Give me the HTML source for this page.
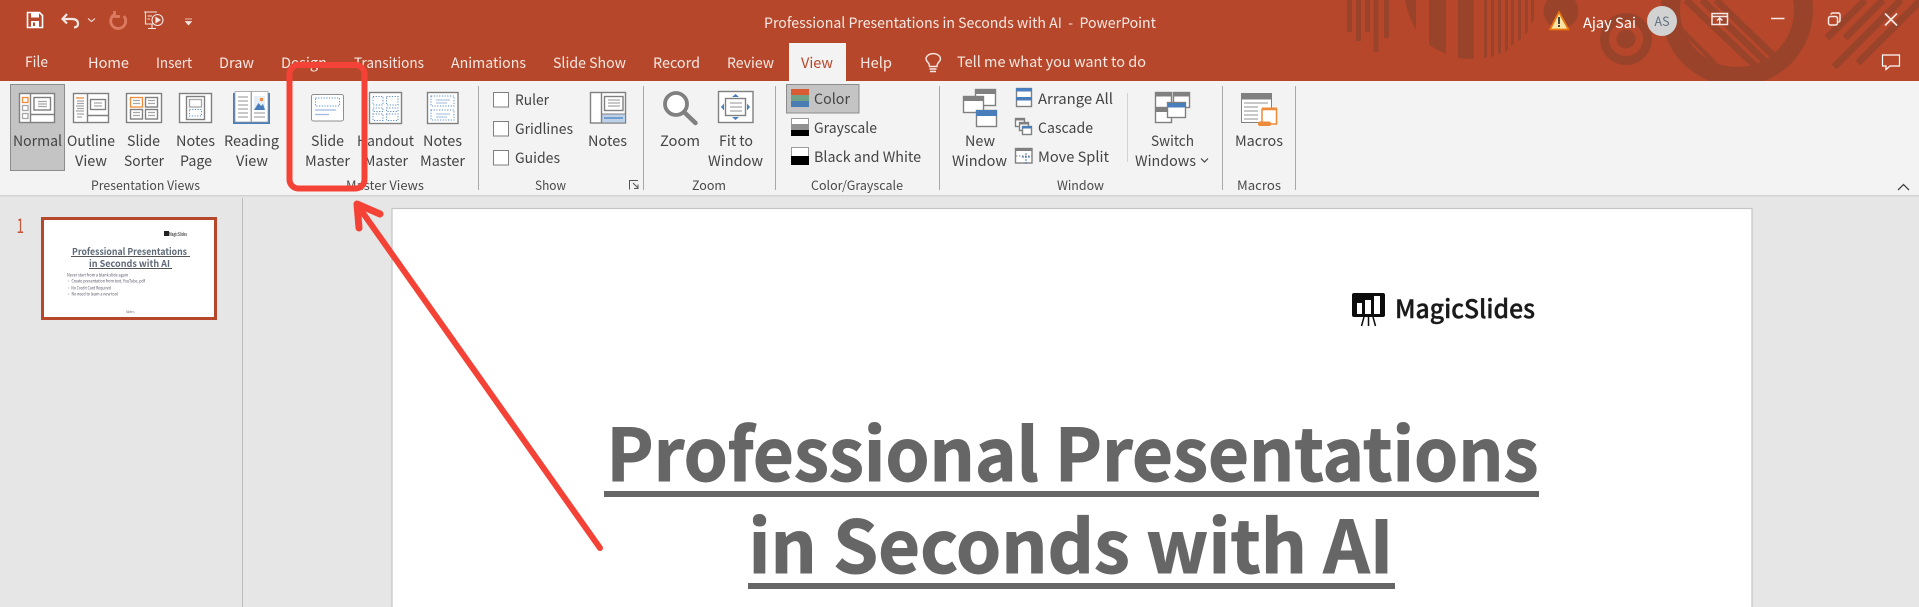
<!DOCTYPE html>
<html><head><meta charset="utf-8"><title>Professional Presentations in Seconds with AI - PowerPoint</title>
<style>
html,body{margin:0;padding:0;width:1919px;height:607px;overflow:hidden;background:#e6e6e6}
svg{display:block;position:absolute;left:0;top:0}
text{font-family:"Noto Sans CJK SC","Liberation Sans",sans-serif;white-space:pre}
.t{font-size:14.5px;fill:#f6e8e4}
.l{font-size:14.5px;fill:#444}
.g{font-size:12.5px;fill:#4a4a4a}
.i{fill:#fff;stroke:#808080;stroke-width:1.4}
.n{fill:none;stroke:#808080;stroke-width:1.4}
.b{fill:none;stroke:#5b8cc4;stroke-width:1;stroke-dasharray:1.2 1.5}
.p{fill:#9a432b}
.d{fill:none;stroke:#9a432b}
.m{fill:none;stroke:#a6a6a6;stroke-width:1.3}
.sep{stroke:#a8a8a8;stroke-width:1}
</style></head><body>
<svg width="1919" height="607" viewBox="0 0 1919 607" xmlns="http://www.w3.org/2000/svg">
<defs><clipPath id="banner"><rect width="1919" height="81"/></clipPath>
<clipPath id="inner"><circle cx="1737" cy="10" r="57"/></clipPath></defs>
<rect width="1919" height="607" fill="#e6e6e6"/>
<!-- title bar -->
<rect width="1919" height="81" fill="#b7472a"/>
<g clip-path="url(#banner)">
<rect class="p" x="1347" y="0" width="5" height="32"/><rect class="p" x="1356" y="0" width="5" height="41"/><rect class="p" x="1365" y="0" width="5" height="32"/><rect class="p" x="1373.5" y="0" width="5" height="52"/><rect class="p" x="1384" y="0" width="5" height="38"/>
<path class="p" d="M1405 0H1416V30Q1408 16 1405 0Z"/>
<path class="p" d="M1429 0H1446V54Q1437 50 1429 45Z"/>
<path class="p" d="M1458 0H1474V59Q1465 59 1458 58Z"/>
<path class="p" d="M1484 0h3v57l-3 1zM1491 0h3v56l-3 1zM1498 0h3v53l-3 1zM1505 0h3v50l-3 2zM1511 0h3v44l-3 2zM1518 0h3v39l-3 2zM1525 0h3v32l-3 3zM1531 0h3v20l-3 4z"/>
<circle class="p" cx="1561" cy="11" r="17.5"/>
<circle class="d" cx="1626" cy="39" r="21.5" stroke-width="9"/><circle class="p" cx="1626" cy="39" r="9.5"/>
<circle class="d" cx="1737" cy="10" r="66.5" stroke-width="19"/>
<g clip-path="url(#inner)" class="d" stroke-width="7">
<path d="M1686 0L1766 76M1702 0L1776 72M1716 0L1786 68"/>
<path d="M1680 28L1716 64" stroke-width="4"/>
</g>
<g class="d" stroke-width="7"><path d="M1827 38L1865 0M1845 38L1883 0M1834 67L1901 0M1858 63L1921 0"/></g>
</g>
<!-- QAT -->
<path d="M27.5 12.5H39.5L42.5 15.5V27.5H27.5Z" fill="none" stroke="#fff" stroke-width="1.6"/><rect x="31" y="12.5" width="8" height="5" fill="#fff"/><rect x="31" y="21" width="8" height="6.5" fill="#fff"/><rect x="33" y="22.5" width="2" height="3.5" fill="#b7472a"/>
<path d="M67 14L62.5 19L67 23.5M63 19H72Q78 19 78 24Q78 27 74 27.5" fill="none" stroke="#f4e6e2" stroke-width="2.2"/>
<path d="M88 18.5L91.5 21.5L95 18.5" fill="none" stroke="#f4e6e2" stroke-width="1.1"/>
<path d="M123.800 16A7.500 7.500 0 1 1 114.500 14.500M114.500 11V16.500H120" fill="none" stroke="#dc7b62" stroke-width="2.800"/>
<g fill="none" stroke="#f4e6e2" stroke-width="1.1"><path d="M144 12H157M145.5 12V24H153M147.5 16H152M147.5 19H150"/><circle cx="157.5" cy="20" r="5.5"/><path d="M156 17.5L160 20L156 22.5Z" fill="#f4e6e2"/><path d="M148 28.5H156M152 24V28"/></g>
<path d="M185 19H192M185.5 21.5H191.5L188.5 25Z" fill="#f4e6e2" stroke="#f4e6e2" stroke-width=".7"/>
<!-- Tabs -->
<text class="t" x="25" y="67" textLength="23" lengthAdjust="spacingAndGlyphs">File</text>
<text class="t" x="88" y="68" textLength="41" lengthAdjust="spacingAndGlyphs">Home</text>
<text class="t" x="156" y="68" textLength="36" lengthAdjust="spacingAndGlyphs">Insert</text>
<text class="t" x="219" y="68" textLength="35" lengthAdjust="spacingAndGlyphs">Draw</text>
<text class="t" x="281" y="68" textLength="46" lengthAdjust="spacingAndGlyphs">Design</text>
<text class="t" x="354" y="68" textLength="70" lengthAdjust="spacingAndGlyphs">Transitions</text>
<text class="t" x="451" y="68" textLength="75" lengthAdjust="spacingAndGlyphs">Animations</text>
<text class="t" x="553" y="68" textLength="73" lengthAdjust="spacingAndGlyphs">Slide Show</text>
<text class="t" x="653" y="68" textLength="47" lengthAdjust="spacingAndGlyphs">Record</text>
<text class="t" x="727" y="68" textLength="47" lengthAdjust="spacingAndGlyphs">Review</text>
<rect x="789" y="43" width="57" height="39" fill="#f3f3f3"/>
<text class="t" x="801" y="68" textLength="32" lengthAdjust="spacingAndGlyphs" style="fill:#b7472a">View</text>
<text class="t" x="860" y="68" textLength="32" lengthAdjust="spacingAndGlyphs">Help</text>
<path d="M930 71.500H936M929.500 69H936.500M929.500 66.500Q929.500 64 928 62.500Q926 60.500 926 58.500A7.300 5.600 0 0 1 940.500 58.500Q940.500 60.500 938.500 62.500Q937 64 937 66.500Z" fill="none" stroke="#f6e8e4" stroke-width="1.400"/>
<text class="t" x="957" y="67" textLength="189" lengthAdjust="spacingAndGlyphs">Tell me what you want to do</text>
<text class="t" x="764" y="28" textLength="392" lengthAdjust="spacingAndGlyphs">Professional Presentations in Seconds with AI  -  PowerPoint</text>
<!-- user -->
<path d="M1559 12L1568.500 29.500H1550Z" fill="#fbe3a1" stroke="#e8760f" stroke-width="1.8" stroke-linejoin="round"/><rect x="1558" y="17" width="2" height="7" fill="#444"/><rect x="1558" y="25" width="2" height="2" fill="#444"/>
<text class="t" x="1583" y="28" textLength="53" lengthAdjust="spacingAndGlyphs" style="fill:#fff">Ajay Sai</text>
<circle cx="1662" cy="21" r="15" fill="#d2d2d2"/>
<text x="1654.500" y="26" font-size="12.500" textLength="15" lengthAdjust="spacingAndGlyphs" fill="#5f6f80">AS</text>
<g fill="none" stroke="#f6e8e4" stroke-width="1.5"><path d="M1712 13.500H1727.500V24.500H1712ZM1712 16.500H1727.500"/><path d="M1719.700 24V18.500M1717 20.500L1719.700 18L1722.500 20.500"/>
<path d="M1771 18.500H1784.500"/><rect x="1828.500" y="16.500" width="9" height="8.500" rx="2"/><path d="M1831 14.500Q1831 13 1833 13H1838Q1840 13 1840 15V20Q1840 22 1838.500 22"/>
<path d="M1885 13.500L1897 25.500M1897 13.500L1885 25.500" stroke-width="1.7"/></g>
<path d="M1882.500 55H1899.500V66H1890L1886 69.500V66H1882.500Z" fill="none" stroke="#fff" stroke-width="1.200"/>
<!-- ribbon -->
<rect y="81" width="1919" height="114" fill="#f3f3f3"/>
<rect y="195" width="1919" height="1.500" fill="#d3d3d3"/>
<path class="sep" d="M478.500 86V190M643.500 86V190M775.500 86V190M939.500 86V190M1222.500 86V190M1295.500 86V190"/>
<path stroke="#d2d2d2" d="M1127.500 93V162"/>
<rect x="10.500" y="84.500" width="54" height="86" fill="#c4c4c4" stroke="#8c8c8c" stroke-width="1"/>
<!-- Normal icon -->
<rect class="i" x="19.500" y="93.500" width="35" height="29"/><path class="n" d="M30.500 93.500V122.500M30.500 114.500H54.500"/><rect class="n" x="34" y="97.500" width="16.500" height="12.500"/>
<path class="m" d="M38 101.500H47M38 104H47M38 106.500H47"/>
<rect x="22.500" y="97.500" width="5.500" height="5" fill="none" stroke="#ed8b3a" stroke-width="1.300"/><rect x="22.500" y="105.500" width="5.500" height="5" class="m"/><rect x="22.500" y="113.500" width="5.500" height="5" class="m"/>
<!-- Outline -->
<rect class="i" x="73.500" y="93.500" width="35" height="29"/><path class="n" d="M87.500 93.500V122.500M87.500 115.500H108.500"/><rect class="n" x="90.500" y="99.500" width="15" height="10"/>
<path stroke="#ed8b3a" stroke-width="1.300" d="M76 98H84"/><path class="m" d="M77 101H84M77 103.500H84M76 106H84M77 108.500H84M76 111H84M77 114H84M77 117H82M94 103H102M94 106H102"/>
<!-- Sorter -->
<rect class="i" x="126.500" y="93.500" width="35" height="29"/><rect x="130.500" y="97.500" width="12" height="9.500" fill="none" stroke="#ed8b3a" stroke-width="1.300"/><rect class="n" x="145.500" y="97.500" width="12" height="9.500"/><rect class="n" x="130.500" y="109.500" width="12" height="9.500"/><rect class="n" x="145.500" y="109.500" width="12" height="9.500"/>
<path class="m" d="M133 100.500H140M133 103.500H140M148 100.500H155M148 103.500H155M133 112.500H140M133 115.500H140M148 112.500H155M148 115.500H155"/>
<!-- Notes Page -->
<rect class="i" x="179.500" y="93.500" width="32" height="29"/><rect class="n" x="186.500" y="96.500" width="18" height="23"/><rect class="m" x="189.500" y="99.500" width="12" height="7.500"/><rect class="b" x="189.500" y="109.500" width="12" height="6.500"/>
<!-- Reading -->
<rect x="233" y="93" width="37" height="31" fill="#4a7ebb"/><path d="M235 91.500H251V122H235ZM251.500 91.500H268V122H251.500Z" fill="#fff" stroke="#9a9a9a" stroke-width=".8"/>
<path class="m" d="M238 97H248M238 101H248M238 105H248M238 109H248M238 113H248M238 117H248M254 113H265M254 117H265"/><rect x="254" y="96" width="11" height="14" fill="#e8eef5"/><path d="M254 110L258.500 103L261 106L263 104L265 110Z" fill="#4a7ebb"/><circle cx="261.500" cy="99.500" r="1.700" fill="#ed8b3a"/>
<!-- Slide Master -->
<rect x="311.500" y="94.500" width="32" height="26.500" rx="2" fill="#fff" stroke="#8f8f8f" stroke-width="1"/><rect class="b" x="315.500" y="98" width="24" height="8"/><path stroke="#9dbbdc" stroke-width="1.200" d="M315 110H336M315 114.500H329"/>
<!-- Handout -->
<rect class="i" x="369.500" y="92.500" width="32" height="31"/><path class="b" d="M373 96.500H383V105H373ZM386.500 96.500H398V105H386.500ZM373 108H383V111.500H373ZM386.500 108H398V111.500H386.500ZM373 114H383V120.500H373ZM386.500 114H398V120.500H386.500Z"/>
<!-- Notes Master -->
<rect class="i" x="427.500" y="92.500" width="30.500" height="31"/><rect class="b" x="431" y="96" width="23" height="10"/><rect class="b" x="431" y="110" width="23" height="10"/><path stroke="#9dbbdc" d="M436 100H450M436 103H447M436 114H450M436 117H447"/>
<!-- Labels presentation -->
<text class="l" x="13" y="146" textLength="49" lengthAdjust="spacingAndGlyphs">Normal</text>
<text class="l" x="67" y="146" textLength="48" lengthAdjust="spacingAndGlyphs">Outline</text><text class="l" x="75" y="166" textLength="32" lengthAdjust="spacingAndGlyphs">View</text>
<text class="l" x="127" y="146" textLength="33" lengthAdjust="spacingAndGlyphs">Slide</text><text class="l" x="124" y="166" textLength="40" lengthAdjust="spacingAndGlyphs">Sorter</text>
<text class="l" x="176" y="146" textLength="39" lengthAdjust="spacingAndGlyphs">Notes</text><text class="l" x="180" y="166" textLength="32" lengthAdjust="spacingAndGlyphs">Page</text>
<text class="l" x="224" y="146" textLength="55" lengthAdjust="spacingAndGlyphs">Reading</text><text class="l" x="236" y="166" textLength="32" lengthAdjust="spacingAndGlyphs">View</text>
<text class="l" x="311" y="146" textLength="33" lengthAdjust="spacingAndGlyphs">Slide</text><text class="l" x="305" y="166" textLength="45" lengthAdjust="spacingAndGlyphs">Master</text>
<text class="l" x="357" y="146" textLength="57" lengthAdjust="spacingAndGlyphs">Handout</text><text class="l" x="364" y="166" textLength="44" lengthAdjust="spacingAndGlyphs">Master</text>
<text class="l" x="423" y="146" textLength="39" lengthAdjust="spacingAndGlyphs">Notes</text><text class="l" x="420" y="166" textLength="45" lengthAdjust="spacingAndGlyphs">Master</text>
<text class="g" x="91" y="190" textLength="109" lengthAdjust="spacingAndGlyphs">Presentation Views</text>
<text class="g" x="346" y="190" textLength="78" lengthAdjust="spacingAndGlyphs">Master Views</text>
<!-- Show -->
<g fill="#fff" stroke="#7f7f7f" stroke-width="1"><rect x="493.500" y="92.500" width="15" height="14.500"/><rect x="493.500" y="121.500" width="15" height="14.500"/><rect x="493.500" y="150.500" width="15" height="14.500"/></g>
<text class="l" x="515" y="105" textLength="34" lengthAdjust="spacingAndGlyphs">Ruler</text>
<text class="l" x="515" y="134" textLength="58" lengthAdjust="spacingAndGlyphs">Gridlines</text>
<text class="l" x="515" y="163" textLength="45" lengthAdjust="spacingAndGlyphs">Guides</text>
<rect class="i" x="590.500" y="92.500" width="35" height="30.500"/><rect x="601.500" y="114" width="24" height="9" fill="#bdd1e8" stroke="#808080"/><path class="n" d="M601.500 92.500V123"/><rect class="n" x="604.500" y="96.500" width="18.500" height="14"/><path class="m" d="M608 100H620M608 103H620M608 106H620"/><path stroke="#4a7ebb" stroke-width="1.200" d="M604 118H623"/>
<text class="l" x="588" y="146" textLength="39" lengthAdjust="spacingAndGlyphs">Notes</text>
<text class="g" x="535" y="190" textLength="31" lengthAdjust="spacingAndGlyphs">Show</text>
<path d="M629.500 189.500V180.500H638M633 183L638 188M638 184.500V188.500H634" fill="none" stroke="#555" stroke-width="1"/>
<!-- Zoom -->
<circle cx="676" cy="104" r="11" fill="#fff" stroke="#808080" stroke-width="3.800"/><path d="M684 112L695.500 123" stroke="#808080" stroke-width="4.500" stroke-linecap="round"/>
<rect class="i" x="718.500" y="91.500" width="34.500" height="31"/><rect class="n" x="725.500" y="98.500" width="20" height="17"/><path class="m" d="M730 103H742M730 107H742M730 111H742"/><path d="M735.500 94L739 97H732ZM735.500 120L739 117H732ZM721 107L724 103.500V110.500ZM750 107L747 103.500V110.500Z" fill="#4a7ebb"/>
<text class="l" x="660" y="146" textLength="40" lengthAdjust="spacingAndGlyphs">Zoom</text>
<text class="l" x="719" y="146" textLength="34" lengthAdjust="spacingAndGlyphs">Fit to</text>
<text class="l" x="708" y="166" textLength="55" lengthAdjust="spacingAndGlyphs">Window</text>
<text class="g" x="692" y="190" textLength="34" lengthAdjust="spacingAndGlyphs">Zoom</text>
<!-- Color -->
<rect x="786.500" y="84.500" width="72.500" height="28.500" fill="#c4c4c4" stroke="#8c8c8c"/>
<rect x="791" y="89" width="18" height="6" fill="#d95b34"/><rect x="791" y="95" width="18" height="6" fill="#6fa287"/><rect x="791" y="101" width="18" height="6" fill="#4b7db5"/>
<rect x="791.500" y="118.500" width="17" height="6" fill="#fff" stroke="#9a9a9a"/><rect x="791" y="124" width="18" height="6" fill="#919191"/><rect x="791" y="130" width="18" height="6" fill="#000"/>
<rect x="791.500" y="147.500" width="17" height="9" fill="#fff" stroke="#9a9a9a"/><rect x="791" y="156" width="18" height="9" fill="#000"/>
<text class="l" x="814" y="104" textLength="36" lengthAdjust="spacingAndGlyphs">Color</text>
<text class="l" x="814" y="133" textLength="63" lengthAdjust="spacingAndGlyphs">Grayscale</text>
<text class="l" x="814" y="162" textLength="107" lengthAdjust="spacingAndGlyphs">Black and White</text>
<text class="g" x="811" y="190" textLength="92" lengthAdjust="spacingAndGlyphs">Color/Grayscale</text>
<!-- Window -->
<rect class="i" x="975.500" y="89.500" width="20" height="16"/><rect x="975" y="89" width="21" height="5" fill="#808080"/>
<rect class="i" x="963.500" y="96.500" width="20" height="16"/><rect x="963" y="96" width="21" height="5" fill="#808080"/>
<rect class="i" x="976.500" y="110.500" width="20" height="16"/><rect x="976" y="110" width="21" height="6" fill="#4a7ebb"/>
<text class="l" x="965" y="146" textLength="30" lengthAdjust="spacingAndGlyphs">New</text>
<text class="l" x="952" y="166" textLength="55" lengthAdjust="spacingAndGlyphs">Window</text>
<rect class="i" x="1016.500" y="88.500" width="15" height="18"/><rect x="1016" y="88" width="16" height="3.500" fill="#4a7ebb"/><rect x="1016" y="97" width="16" height="3.500" fill="#4a7ebb"/>
<rect class="i" x="1015.500" y="118.500" width="9" height="8"/><rect x="1015" y="118" width="10" height="2.500" fill="#808080"/><rect class="i" x="1019.500" y="122.500" width="9" height="8"/><rect x="1019" y="122" width="10" height="2.500" fill="#808080"/><rect class="i" x="1022.500" y="126.500" width="9" height="8"/><rect x="1022" y="126" width="10" height="2.500" fill="#4a7ebb"/>
<rect class="i" x="1015.500" y="148.500" width="16.500" height="14.500"/><rect x="1015" y="148" width="17" height="3" fill="#808080"/><path d="M1016 156H1032" stroke="#808080" stroke-width="1" stroke-dasharray="1.500 1.500"/><path d="M1026 153V164M1022 157H1030" stroke="#4a7ebb" stroke-width="1" stroke-dasharray="2 1"/>
<text class="l" x="1038" y="104" textLength="75" lengthAdjust="spacingAndGlyphs">Arrange All</text>
<text class="l" x="1038" y="133" textLength="55" lengthAdjust="spacingAndGlyphs">Cascade</text>
<text class="l" x="1038" y="162" textLength="71" lengthAdjust="spacingAndGlyphs">Move Split</text>
<text class="g" x="1057" y="190" textLength="47" lengthAdjust="spacingAndGlyphs">Window</text>
<rect class="i" x="1155.500" y="92.500" width="16" height="15"/><rect x="1155" y="92" width="17" height="4.500" fill="#808080"/><rect class="i" x="1173.500" y="92.500" width="16" height="15"/><rect x="1173" y="92" width="17" height="4.500" fill="#808080"/><rect class="i" x="1155.500" y="108.500" width="16" height="14"/><rect x="1155" y="108" width="17" height="4" fill="#808080"/>
<rect x="1167.500" y="102.500" width="18" height="15" fill="#fff" stroke="#808080" stroke-width="1.400"/><rect x="1168" y="103" width="18" height="4.500" fill="#4a7ebb"/>
<text class="l" x="1151" y="146" textLength="43" lengthAdjust="spacingAndGlyphs">Switch</text>
<text class="l" x="1135" y="166" textLength="61" lengthAdjust="spacingAndGlyphs">Windows</text>
<path d="M1201 158.500L1204.500 162L1208 158.500" fill="none" stroke="#444" stroke-width="1.200"/>
<!-- Macros -->
<rect x="1241.500" y="93.500" width="30" height="29" fill="#fff" stroke="#808080"/><rect x="1241" y="93" width="31" height="6.500" fill="#808080"/><path class="m" d="M1244 103H1268M1244 107H1258M1244 111H1258M1244 115H1258M1244 119H1258"/>
<path d="M1262 109.500H1276.500V124H1262Z" fill="#fff" stroke="#ed8b3a" stroke-width="1.500"/><rect x="1258" y="121.500" width="13" height="4.500" rx="2" fill="#ed8b3a"/><path d="M1262 108.500H1277" stroke="#ed8b3a" stroke-width="2"/>
<text class="l" x="1235" y="146" textLength="48" lengthAdjust="spacingAndGlyphs">Macros</text>
<text class="g" x="1237" y="190" textLength="44" lengthAdjust="spacingAndGlyphs">Macros</text>
<path d="M1898 190L1903.500 184.500L1909 190" fill="none" stroke="#444" stroke-width="1.300"/>
<!-- side panel -->
<path stroke="#bebebe" stroke-width="1" d="M242.500 198V607"/>
<text x="16.500" y="233" font-size="20" fill="#c4563a" textLength="7.500" lengthAdjust="spacingAndGlyphs">1</text>
<rect x="42.500" y="218.500" width="173" height="100" fill="#fff" stroke="#b7472a" stroke-width="3"/>
<rect x="164" y="231" width="5" height="5" fill="#222"/><text x="169" y="236" font-size="5" font-weight="700" fill="#555" textLength="18" lengthAdjust="spacingAndGlyphs">MagicSlides</text>
<text x="72" y="255" font-size="9.500" font-weight="700" fill="#5f6a78" textLength="115" lengthAdjust="spacingAndGlyphs">Professional Presentations</text>
<rect x="71" y="256" width="119" height="1" fill="#555"/>
<text x="89" y="267" font-size="9.500" font-weight="700" fill="#5f6a78" textLength="81" lengthAdjust="spacingAndGlyphs">in Seconds with AI</text>
<rect x="89" y="268" width="83" height="1" fill="#555"/>
<g font-size="4.300" fill="#58586a"><text x="67" y="276.500" textLength="61" lengthAdjust="spacingAndGlyphs">Never start from a blank slide again</text>
<text x="67" y="282.500" textLength="78" lengthAdjust="spacingAndGlyphs">• Create presentation from text, YouTube, pdf</text>
<text x="67" y="289.500" textLength="44" lengthAdjust="spacingAndGlyphs">• No Credit Card Required</text>
<text x="67" y="295.500" textLength="51" lengthAdjust="spacingAndGlyphs">• No need to learn a new tool</text>
<text x="126" y="313" font-size="2.800">Slide 1</text></g>
<!-- slide -->
<rect x="392" y="208.500" width="1360" height="410" fill="#fff" stroke="#c4c4c4" stroke-width="1.200"/>
<rect x="1352" y="293" width="33" height="24" rx="2" fill="#0c0c0c"/><path d="M1357 303H1362V314H1357ZM1365 300H1371V314H1365ZM1374 296H1380V314H1374Z" fill="#fff"/>
<path d="M1368.500 317V326M1364 317L1361.500 326M1373 317L1375.500 326" stroke="#0c0c0c" stroke-width="1.500"/>
<text x="1395" y="318" font-weight="500" font-size="25" fill="#1a1a1a" stroke="#1a1a1a" stroke-width=".4" textLength="140" lengthAdjust="spacingAndGlyphs">MagicSlides</text>
<text x="606.500" y="481" font-size="72" font-weight="700" fill="#666" stroke="#666" stroke-width="1" textLength="932" lengthAdjust="spacingAndGlyphs">Professional Presentations</text>
<rect x="604" y="491" width="935" height="6" fill="#666"/>
<text x="748.500" y="573" font-size="72" font-weight="700" fill="#666" stroke="#666" stroke-width="1" textLength="645" lengthAdjust="spacingAndGlyphs">in Seconds with AI</text>
<rect x="748" y="583" width="647" height="6" fill="#666"/>
<!-- annotations -->
<rect x="289.500" y="65" width="75" height="123.500" rx="9" fill="none" stroke="#f44336" stroke-width="6"/>
<path d="M600 548L358 206" stroke="#f44336" stroke-width="6" stroke-linecap="round" fill="none"/>
<path d="M359 228L357 204L380 214" stroke="#f44336" stroke-width="7" stroke-linecap="round" stroke-linejoin="round" fill="none"/>
</svg>
</body></html>
